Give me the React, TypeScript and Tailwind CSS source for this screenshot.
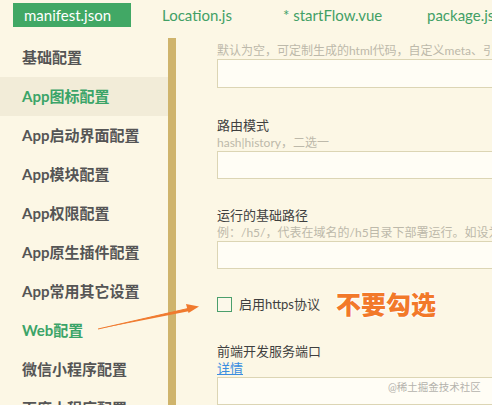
import React from "react";

const sideItems = [
  "基础配置",
  "App图标配置",
  "App启动界面配置",
  "App模块配置",
  "App权限配置",
  "App原生插件配置",
  "App常用其它设置",
  "Web配置",
  "微信小程序配置",
  "百度小程序配置",
];

function Input() {
  return <div className="h-[28px] w-[320px] shrink-0 border border-[#dcd5b4] bg-[#fffdf5]" />;
}

export default function App() {
  return (
    <div
      className="relative h-[405px] w-[492px] overflow-hidden bg-[#fcf7e5]"
      style={{ fontFamily: 'Lato, "Noto Sans CJK SC", sans-serif' }}
    >
      {/* tab bar */}
      <div className="flex h-[38px] items-start pt-[3px] text-[15px] leading-[24px] whitespace-nowrap">
        <div className="ml-[13px] h-[24px] w-[118px] bg-[#41a865] pl-[11px] text-white">manifest.json</div>
        <div className="absolute left-[162px] top-[3px] text-[#42a066]">Location.js</div>
        <div className="absolute left-[283px] top-[3px] text-[#42a066]">* startFlow.vue</div>
        <div className="absolute left-[427px] top-[3px] text-[#42a066]">package.json</div>
      </div>

      <div className="flex h-[367px]">
        {/* sidebar */}
        <div className="w-[168px] shrink-0 overflow-hidden">
          {sideItems.map((t, i) => (
            <div
              key={t}
              className={
                "flex h-[39px] items-center pl-[22px] text-[15px] font-bold whitespace-nowrap " +
                (i === 1 ? "bg-[#f2ecd8] text-[#3ba468]" : i === 7 ? "text-[#3ba468]" : "text-[#555555]")
              }
            >
              {t}
            </div>
          ))}
        </div>
        <div className="w-[8px] shrink-0 bg-[#cfb46c]" />

        {/* content */}
        <div className="flex min-w-0 flex-1 flex-col overflow-hidden pl-[41px] pt-[3.5px] whitespace-nowrap">
          <div className="text-[12px] leading-[17px] text-[#bdb9aa]">默认为空，可定制生成的html代码，自定义meta、引入外部样式等</div>
          <div className="mt-[0.5px]"><div className="h-[29px] w-[320px] border border-[#dcd5b4] bg-[#fffdf5]" /></div>

          <div className="mt-[28.5px] text-[13px] leading-[17px] text-[#3f3f3f]">路由模式</div>
          <div className="text-[12px] leading-[17px] text-[#bdb9aa]">hash|history，二选一</div>
          <Input />

          <div className="mt-[28.5px] text-[13px] leading-[17px] text-[#3f3f3f]">运行的基础路径</div>
          <div className="text-[12px] leading-[17px] text-[#bdb9aa]">例：/h5/，代表在域名的/h5目录下部署运行。如设为./，则代表相对路径</div>
          <Input />

          <div className="mt-[27px] flex h-[17px] items-center">
            <div className="h-[15px] w-[15px] border border-[#4b9f6c] bg-[#fcf8ea]" />
            <span className="ml-[7px] text-[13px] leading-[17px] text-[#3f3f3f]">启用https协议</span>
          </div>

          <div className="mt-[30px] text-[13px] leading-[17px] text-[#3f3f3f]">前端开发服务端口</div>
          <div className="text-[13px] leading-[17px] text-[#3a8de0] underline">详情</div>
          <Input />
        </div>
      </div>

      {/* annotation */}
      <div
        className="absolute left-[336px] top-[288px] text-[25px] font-black leading-[31px] text-[#f2792a]"
        style={{ fontFamily: '"Noto Sans CJK SC", sans-serif', textShadow: "0 0 2px #fff, 0 0 2px #fff, 0 0 3px #fff" }}
      >
        不要勾选
      </div>
      <svg className="absolute left-0 top-0" width="492" height="405" viewBox="0 0 492 405">
        <path d="M98 329 L188 308.5 L188.6 311.2 Z" fill="#f07a2e" />
        <path d="M98 329 L188 308.5" stroke="#f07a2e" strokeWidth="1" />
        <path d="M199 306.5 L186 304 L188.5 313 Z" fill="#f07a2e" />
      </svg>
      <div className="absolute left-[388px] top-[379px] text-[10.5px] leading-[16px] text-[#b5b3ad] whitespace-nowrap">
        @稀土掘金技术社区
      </div>
    </div>
  );
}
